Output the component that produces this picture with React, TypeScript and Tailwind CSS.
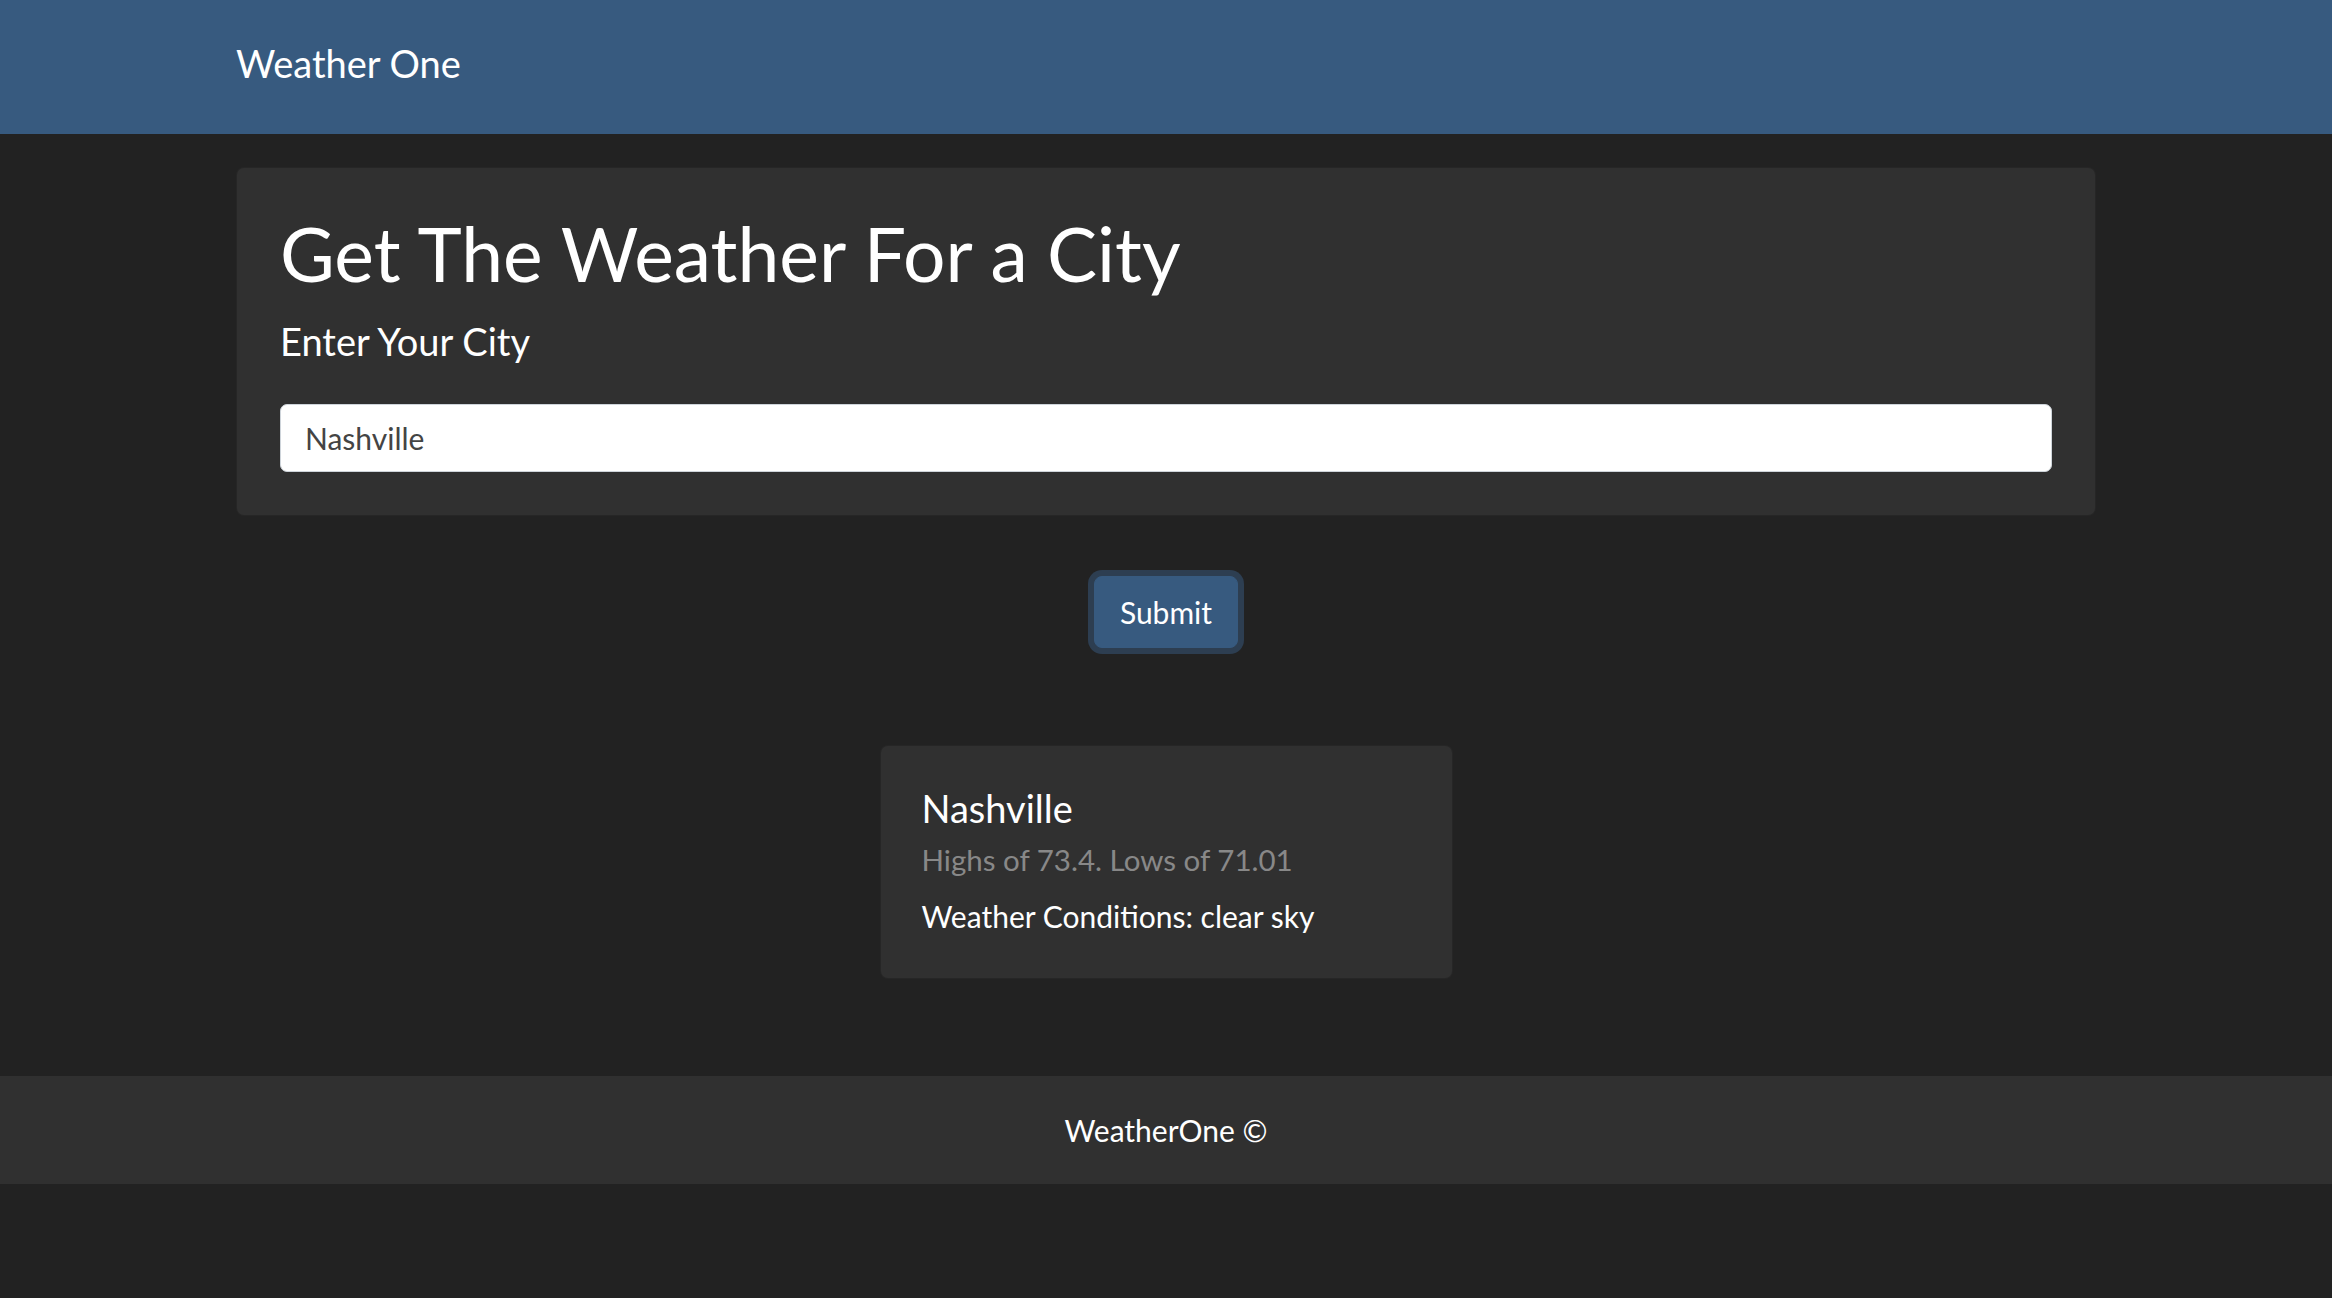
export default function App() {
  return (
    <div className="min-h-screen bg-[#222222] font-['Lato',sans-serif] text-white">
      {/* Navbar */}
      <nav className="h-[134px] bg-[#375a7f]">
        <div className="mx-auto w-[1860px] pt-[40px]">
          <span className="text-[38px] leading-[46px]">Weather One</span>
        </div>
      </nav>

      <main className="mx-auto w-[1860px]">
        {/* Search card */}
        <div className="mt-[33px] rounded-[8px] border border-black/20 bg-[#303030] px-[43px] pt-[40px] pb-[43px]">
          <h1 className="text-[75px] leading-[90px]">Get The Weather For a City</h1>
          <label htmlFor="city" className="mt-[20px] block text-[38px] leading-[46px]">
            Enter Your City
          </label>
          <input
            id="city"
            type="text"
            defaultValue="Nashville"
            className="mt-[40px] block h-[68px] w-full rounded-[7px] border border-[#ced4da] bg-white px-[24px] text-[30px] text-[#444444] outline-none"
          />
        </div>

        {/* Submit */}
        <div className="mt-[60px] flex justify-center">
          <button
            type="button"
            className="h-[72px] w-[144px] rounded-[8px] border border-[#375a7f] bg-[#375a7f] text-[30px] leading-[40px] text-white shadow-[0_0_0_6px_rgba(55,90,127,0.5)]"
          >
            Submit
          </button>
        </div>

        {/* Result */}
        <div className="mt-[97px] flex justify-center">
          <div className="w-[573px] rounded-[8px] border border-black/20 bg-[#303030] px-[41px] pt-[39px] pb-[42px]">
            <h5 className="text-[38px] leading-[46px]">Nashville</h5>
            <p className="mt-[9px] text-[29.5px] leading-[40px] text-[#888888]">
              Highs of 73.4. Lows of 71.01
            </p>
            <p className="mt-[16px] text-[30px] leading-[40px]">Weather Conditions: clear sky</p>
          </div>
        </div>
      </main>

      {/* Footer */}
      <footer className="mt-[97px] h-[108px] bg-[#303030] pt-[34px] text-center">
        <span className="text-[30px] leading-[40px]">WeatherOne ©</span>
      </footer>
    </div>
  )
}
